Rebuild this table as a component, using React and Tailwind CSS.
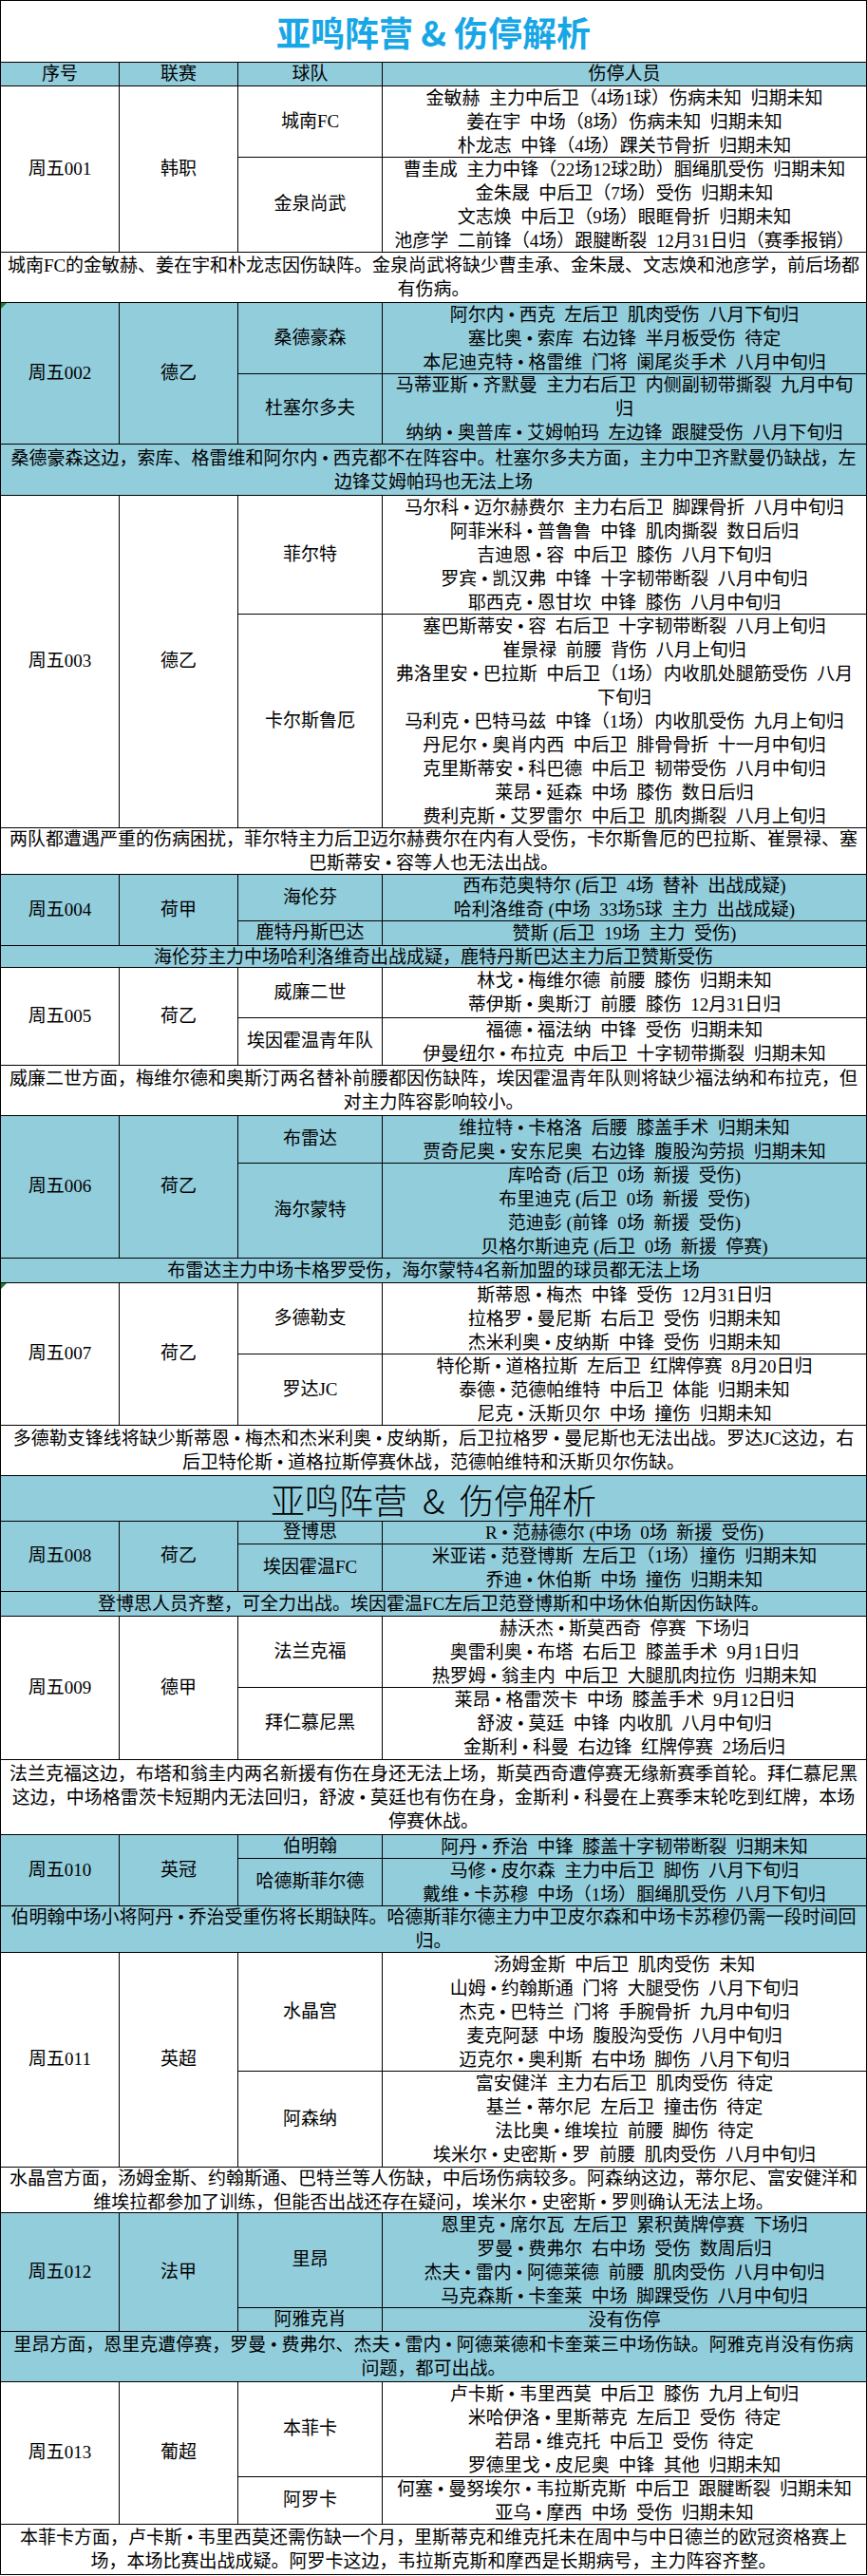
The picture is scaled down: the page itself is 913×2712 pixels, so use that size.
import React from 'react';

// 亚鸣阵营 伤停表 — Excel-style table
const matches = [
  {
    no: '周五001', league: '韩职', blue: false,
    teams: [
      { name: '城南FC', h: 75, lines: ['金敏赫  主力中后卫（4场1球）伤病未知  归期未知', '姜在宇  中场（8场）伤病未知  归期未知', '朴龙志  中锋（4场）踝关节骨折  归期未知'] },
      { name: '金泉尚武', h: 100, lines: ['曹圭成  主力中锋（22场12球2助）腘绳肌受伤  归期未知', '金朱晟  中后卫（7场）受伤  归期未知', '文志焕  中后卫（9场）眼眶骨折  归期未知', '池彦学  二前锋（4场）跟腱断裂  12月31日归（赛季报销）'] },
    ],
    noteH: 53,
    note: ['城南FC的金敏赫、姜在宇和朴龙志因伤缺阵。金泉尚武将缺少曹圭承、金朱晟、文志焕和池彦学，前后场都', '有伤病。'],
  },
  {
    no: '周五002', league: '德乙', blue: true, flag: true,
    teams: [
      { name: '桑德豪森', h: 75, lines: ['阿尔内•西克  左后卫  肌肉受伤  八月下旬归', '塞比奥•索库  右边锋  半月板受伤  待定', '本尼迪克特•格雷维  门将  阑尾炎手术  八月中旬归'] },
      { name: '杜塞尔多夫', h: 74, lines: ['马蒂亚斯•齐默曼  主力右后卫  内侧副韧带撕裂  九月中旬', '归', '纳纳•奥普库•艾姆帕玛  左边锋  跟腱受伤  八月下旬归'] },
    ],
    noteH: 54,
    note: ['桑德豪森这边，索库、格雷维和阿尔内•西克都不在阵容中。杜塞尔多夫方面，主力中卫齐默曼仍缺战，左', '边锋艾姆帕玛也无法上场'],
  },
  {
    no: '周五003', league: '德乙', blue: false,
    teams: [
      { name: '菲尔特', h: 125, lines: ['马尔科•迈尔赫费尔  主力右后卫  脚踝骨折  八月中旬归', '阿菲米科•普鲁鲁  中锋  肌肉撕裂  数日后归', '吉迪恩•容  中后卫  膝伤  八月下旬归', '罗宾•凯汉弗  中锋  十字韧带断裂  八月中旬归', '耶西克•恩甘坎  中锋  膝伤  八月中旬归'] },
      { name: '卡尔斯鲁厄', h: 225, lines: ['塞巴斯蒂安•容  右后卫  十字韧带断裂  八月上旬归', '崔景禄  前腰  背伤  八月上旬归', '弗洛里安•巴拉斯  中后卫（1场）内收肌处腿筋受伤  八月', '下旬归', '马利克•巴特马兹  中锋（1场）内收肌受伤  九月上旬归', '丹尼尔•奥肖内西  中后卫  腓骨骨折  十一月中旬归', '克里斯蒂安•科巴德  中后卫  韧带受伤  八月中旬归', '莱昂•延森  中场  膝伤  数日后归', '费利克斯•艾罗雷尔  中后卫  肌肉撕裂  八月上旬归'] },
    ],
    noteH: 49,
    note: ['两队都遭遇严重的伤病困扰，菲尔特主力后卫迈尔赫费尔在内有人受伤，卡尔斯鲁厄的巴拉斯、崔景禄、塞', '巴斯蒂安•容等人也无法出战。'],
  },
  {
    no: '周五004', league: '荷甲', blue: true,
    teams: [
      { name: '海伦芬', h: 49, lines: ['西布范奥特尔 (后卫  4场  替补  出战成疑)', '哈利洛维奇 (中场  33场5球  主力  出战成疑)'] },
      { name: '鹿特丹斯巴达', h: 26, lines: ['赞斯 (后卫  19场  主力  受伤)'] },
    ],
    noteH: 23,
    note: ['海伦芬主力中场哈利洛维奇出战成疑，鹿特丹斯巴达主力后卫赞斯受伤'],
  },
  {
    no: '周五005', league: '荷乙', blue: false,
    teams: [
      { name: '威廉二世', h: 53, lines: ['林戈•梅维尔德  前腰  膝伤  归期未知', '蒂伊斯•奥斯汀  前腰  膝伤  12月31日归'] },
      { name: '埃因霍温青年队', h: 50, lines: ['福德•福法纳  中锋  受伤  归期未知', '伊曼纽尔•布拉克  中后卫  十字韧带撕裂  归期未知'] },
    ],
    noteH: 53,
    note: ['威廉二世方面，梅维尔德和奥斯汀两名替补前腰都因伤缺阵，埃因霍温青年队则将缺少福法纳和布拉克，但', '对主力阵容影响较小。'],
  },
  {
    no: '周五006', league: '荷乙', blue: true,
    teams: [
      { name: '布雷达', h: 50, lines: ['维拉特•卡格洛  后腰  膝盖手术  归期未知', '贾奇尼奥•安东尼奥  右边锋  腹股沟劳损  归期未知'] },
      { name: '海尔蒙特', h: 100, lines: ['库哈奇 (后卫  0场  新援  受伤)', '布里迪克 (后卫  0场  新援  受伤)', '范迪彭 (前锋  0场  新援  受伤)', '贝格尔斯迪克 (后卫  0场  新援  停赛)'] },
    ],
    noteH: 26,
    note: ['布雷达主力中场卡格罗受伤，海尔蒙特4名新加盟的球员都无法上场'],
  },
  {
    no: '周五007', league: '荷乙', blue: false, flag: true,
    teams: [
      { name: '多德勒支', h: 75, lines: ['斯蒂恩•梅杰  中锋  受伤  12月31日归', '拉格罗•曼尼斯  右后卫  受伤  归期未知', '杰米利奥•皮纳斯  中锋  受伤  归期未知'] },
      { name: '罗达JC', h: 75, lines: ['特伦斯•道格拉斯  左后卫  红牌停赛  8月20日归', '泰德•范德帕维特  中后卫  体能  归期未知', '尼克•沃斯贝尔  中场  撞伤  归期未知'] },
    ],
    noteH: 53,
    note: ['多德勒支锋线将缺少斯蒂恩•梅杰和杰米利奥•皮纳斯，后卫拉格罗•曼尼斯也无法出战。罗达JC这边，右', '后卫特伦斯•道格拉斯停赛休战，范德帕维特和沃斯贝尔伤缺。'],
  },
  { title: true },
  {
    no: '周五008', league: '荷乙', blue: true,
    teams: [
      { name: '登博思', h: 24, lines: ['R•范赫德尔 (中场  0场  新援  受伤)'] },
      { name: '埃因霍温FC', h: 50, lines: ['米亚诺•范登博斯  左后卫（1场）撞伤  归期未知', '乔迪•休伯斯  中场  撞伤  归期未知'] },
    ],
    noteH: 26,
    note: ['登博思人员齐整，可全力出战。埃因霍温FC左后卫范登博斯和中场休伯斯因伤缺阵。'],
  },
  {
    no: '周五009', league: '德甲', blue: false,
    teams: [
      { name: '法兰克福', h: 75, lines: ['赫沃杰•斯莫西奇  停赛  下场归', '奥雷利奥•布塔  右后卫  膝盖手术  9月1日归', '热罗姆•翁圭内  中后卫  大腿肌肉拉伤  归期未知'] },
      { name: '拜仁慕尼黑', h: 76, lines: ['莱昂•格雷茨卡  中场  膝盖手术  9月12日归', '舒波•莫廷  中锋  内收肌  八月中旬归', '金斯利•科曼  右边锋  红牌停赛  2场后归'] },
    ],
    noteH: 79,
    note: ['法兰克福这边，布塔和翁圭内两名新援有伤在身还无法上场，斯莫西奇遭停赛无缘新赛季首轮。拜仁慕尼黑', '这边，中场格雷茨卡短期内无法回归，舒波•莫廷也有伤在身，金斯利•科曼在上赛季末轮吃到红牌，本场', '停赛休战。'],
  },
  {
    no: '周五010', league: '英冠', blue: true,
    teams: [
      { name: '伯明翰', h: 25, lines: ['阿丹•乔治  中锋  膝盖十字韧带断裂  归期未知'] },
      { name: '哈德斯菲尔德', h: 50, lines: ['马修•皮尔森  主力中后卫  脚伤  八月下旬归', '戴维•卡苏穆  中场（1场）腘绳肌受伤  八月下旬归'] },
    ],
    noteH: 49,
    note: ['伯明翰中场小将阿丹•乔治受重伤将长期缺阵。哈德斯菲尔德主力中卫皮尔森和中场卡苏穆仍需一段时间回', '归。'],
  },
  {
    no: '周五011', league: '英超', blue: false,
    teams: [
      { name: '水晶宫', h: 125, lines: ['汤姆金斯  中后卫  肌肉受伤  未知', '山姆•约翰斯通  门将  大腿受伤  八月下旬归', '杰克•巴特兰  门将  手腕骨折  九月中旬归', '麦克阿瑟  中场  腹股沟受伤  八月中旬归', '迈克尔•奥利斯  右中场  脚伤  八月下旬归'] },
      { name: '阿森纳', h: 101, lines: ['富安健洋  主力右后卫  肌肉受伤  待定', '基兰•蒂尔尼  左后卫  撞击伤  待定', '法比奥•维埃拉  前腰  脚伤  待定', '埃米尔•史密斯•罗  前腰  肌肉受伤  八月中旬归'] },
    ],
    noteH: 48,
    note: ['水晶宫方面，汤姆金斯、约翰斯通、巴特兰等人伤缺，中后场伤病较多。阿森纳这边，蒂尔尼、富安健洋和', '维埃拉都参加了训练，但能否出战还存在疑问，埃米尔•史密斯•罗则确认无法上场。'],
  },
  {
    no: '周五012', league: '法甲', blue: true,
    teams: [
      { name: '里昂', h: 100, lines: ['恩里克•席尔瓦  左后卫  累积黄牌停赛  下场归', '罗曼•费弗尔  右中场  受伤  数周后归', '杰夫•雷内•阿德莱德  前腰  肌肉受伤  八月中旬归', '马克森斯•卡奎莱  中场  脚踝受伤  八月中旬归'] },
      { name: '阿雅克肖', h: 25, lines: ['没有伤停'] },
    ],
    noteH: 53,
    note: ['里昂方面，恩里克遭停赛，罗曼•费弗尔、杰夫•雷内•阿德莱德和卡奎莱三中场伤缺。阿雅克肖没有伤病', '问题，都可出战。'],
  },
  {
    no: '周五013', league: '葡超', blue: false,
    teams: [
      { name: '本菲卡', h: 100, lines: ['卢卡斯•韦里西莫  中后卫  膝伤  九月上旬归', '米哈伊洛•里斯蒂克  左后卫  受伤  待定', '若昂•维克托  中后卫  受伤  待定', '罗德里戈•皮尼奥  中锋  其他  归期未知'] },
      { name: '阿罗卡', h: 50, lines: ['何塞•曼努埃尔•韦拉斯克斯  中后卫  跟腱断裂  归期未知', '亚乌•摩西  中场  受伤  归期未知'] },
    ],
    noteH: 53,
    note: ['本菲卡方面，卢卡斯•韦里西莫还需伤缺一个月，里斯蒂克和维克托未在周中与中日德兰的欧冠资格赛上', '场，本场比赛出战成疑。阿罗卡这边，韦拉斯克斯和摩西是长期病号，主力阵容齐整。'],
  },
];

// the bullet in the sheet sits with a little air on both sides
const Line = ({ children }) => (
  <div className="h-[25px] leading-[25px] whitespace-pre">{children.split('•').join(' • ')}</div>
);

const Match = ({ m }) => {
  const bg = m.blue ? 'bg-[#92cddc]' : 'bg-white';
  return (
    <>
      <div className={`relative flex border-b border-black ${bg}`}>
        {m.flag && (
          <div className="absolute left-0 top-0 w-0 h-0 border-t-[6px] border-r-[6px] border-t-[#1e7b34] border-r-transparent" />
        )}
        <div className="w-[125px] shrink-0 border-r border-black flex items-center justify-center">{m.no}</div>
        <div className="w-[125px] shrink-0 border-r border-black flex items-center justify-center">{m.league}</div>
        <div className="flex-1 flex flex-col">
          {m.teams.map((t, i) => {
            const last = i === m.teams.length - 1;
            return (
              <div
                key={t.name}
                className={`flex ${last ? '' : 'border-b border-black'}`}
                style={{ height: last ? t.h - 1 : t.h }}
              >
                <div className="w-[152px] shrink-0 border-r border-black flex items-center justify-center">{t.name}</div>
                <div className="flex-1 flex flex-col items-center justify-center overflow-hidden">
                  {t.lines.map((l, j) => (
                    <Line key={j}>{l}</Line>
                  ))}
                </div>
              </div>
            );
          })}
        </div>
      </div>
      <div
        className={`flex flex-col items-center justify-center border-b border-black overflow-hidden ${bg}`}
        style={{ height: m.noteH }}
      >
        {m.note.map((l, j) => (
          <Line key={j}>{l}</Line>
        ))}
      </div>
    </>
  );
};

export default function App() {
  return (
    <div className="w-[913px] bg-white text-black text-[19px] font-['Liberation_Serif','Noto_Sans_CJK_SC',serif]">
      <div className="border-l border-r border-t border-black">
        <div className="h-[65px] flex items-center justify-center border-b border-black">
          <h1 className="text-[36px] font-bold leading-none text-[#17a6e6] font-['Noto_Sans_CJK_SC',sans-serif]">
            亚鸣阵营 &amp; 伤停解析
          </h1>
        </div>
        <div className="flex h-[25px] border-b border-black bg-[#92cddc] leading-[24px]">
          <div className="w-[125px] shrink-0 border-r border-black text-center">序号</div>
          <div className="w-[125px] shrink-0 border-r border-black text-center">联赛</div>
          <div className="w-[152px] shrink-0 border-r border-black text-center">球队</div>
          <div className="flex-1 text-center">伤停人员</div>
        </div>
        {matches.map((m, i) =>
          m.title ? (
            <div key={i} className="h-[48px] flex items-center justify-center border-b border-black bg-[#92cddc]">
              <span className="text-[36px] leading-none whitespace-pre font-['Noto_Sans_CJK_SC',serif] font-light">亚鸣阵营  &amp;  伤停解析</span>
            </div>
          ) : (
            <Match key={i} m={m} />
          )
        )}
      </div>
    </div>
  );
}
